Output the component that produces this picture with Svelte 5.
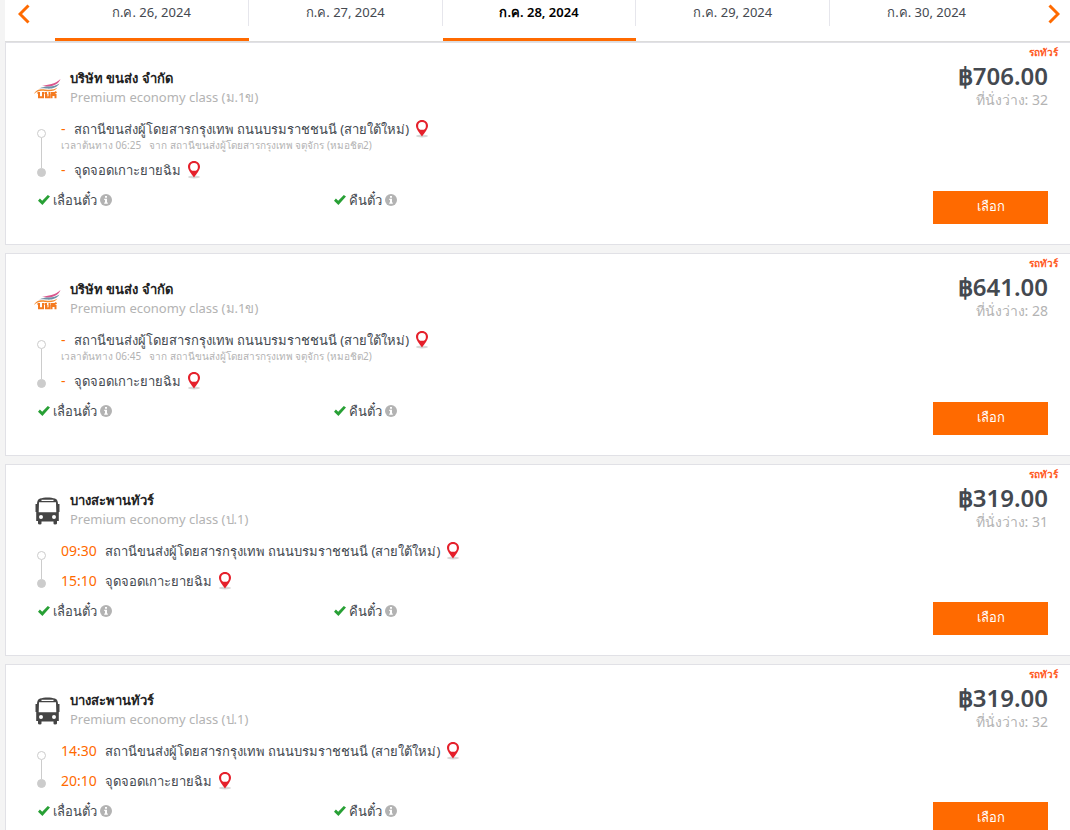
<script>
  const days = [
    { label: 'ก.ค. 26, 2024', marked: true },
    { label: 'ก.ค. 27, 2024' },
    { label: 'ก.ค. 28, 2024', marked: true, current: true },
    { label: 'ก.ค. 29, 2024' },
    { label: 'ก.ค. 30, 2024' }
  ];

  const station = 'สถานีขนส่งผู้โดยสารกรุงเทพ ถนนบรมราชชนนี (สายใต้ใหม่)';
  const stop = 'จุดจอดเกาะยายฉิม';
  const state = {
    name: 'บริษัท ขนส่ง จำกัด',
    logo: 'state',
    grade: 'Premium economy class (ม.1ข)',
    from: '-',
    to: '-',
    via: 'จาก สถานีขนส่งผู้โดยสารกรุงเทพ จตุจักร (หมอชิต2)'
  };
  const tour = { name: 'บางสะพานทัวร์', logo: 'bus', grade: 'Premium economy class (ป.1)' };

  const trips = [
    { ...state, origin: '06:25', price: '706.00', seats: 32 },
    { ...state, origin: '06:45', price: '641.00', seats: 28 },
    { ...tour, from: '09:30', to: '15:10', price: '319.00', seats: 31 },
    { ...tour, from: '14:30', to: '20:10', price: '319.00', seats: 32 }
  ];
</script>

{#snippet pin(label)}
  <button class="pin" aria-label={label}>
    <svg width="14" height="20" viewBox="0 0 14 20">
      <ellipse cx="7" cy="17" rx="6" ry="1.500" fill="#d8d8d8" />
      <path fill="#e5202b" d="M7 1C3.500 1 1 3.500 1 6.700C1 10 4.300 13.500 7 17.500C9.700 13.500 13 10 13 6.700C13 3.500 10.500 1 7 1Z" />
      <circle cx="7" cy="6.900" r="3.900" fill="#fff" />
    </svg>
  </button>
{/snippet}

{#snippet policy(text)}
  <li>
    <svg width="12" height="10" viewBox="0 0 12 10" aria-hidden="true">
      <path d="M0 5.700L1.900 3.600L4.200 5.800L9.800 0L12 1.600L4.400 10Z" fill="#28a035" />
    </svg>
    <span>{text}</span>
    <svg width="12" height="12" viewBox="0 0 12 12" aria-hidden="true">
      <circle cx="6" cy="6" r="6" fill="#b3b3b3" />
      <path d="M5 2H7V3.700H5ZM4.200 4.800H7V8.500H7.800V9.700H4.200V8.500H5V6H4.200Z" fill="#fff" />
    </svg>
  </li>
{/snippet}

<nav class="dates">
  <button class="arrow" aria-label="วันก่อนหน้า">
    <svg width="12" height="20" viewBox="0 0 12 20"><path d="M10.500 1.500L2 10L10.500 18.500" /></svg>
  </button>
  {#each days as day}
    <button class="day" class:marked={day.marked} class:current={day.current}>
      <span>{day.label}</span>
    </button>
  {/each}
  <button class="arrow next" aria-label="วันถัดไป">
    <svg width="12" height="20" viewBox="0 0 12 20"><path d="M1.500 1.500L10 10L1.500 18.500" /></svg>
  </button>
</nav>

<main>
  {#each trips as trip}
    <article>
      <div class="info">
        <header>
          {#if trip.logo === 'state'}
            <svg class="logo" width="28" height="28" viewBox="0 0 28 28" aria-hidden="true">
              <path d="M8 11C14 9.500 21 9.500 26.500 4C25 8.500 20 11 15 11.500C12 11.800 10 11 8 11Z" fill="#d9558c" />
              <path d="M5 13.500C12 10 19 13 25.500 8.500C22 13.500 17 14 12 13.500C9 13.200 7 13.200 5 13.500Z" fill="#6f90a6" />
              <path d="M0 19C2 14.500 6 13.800 11 14.400C16 15 20 15 23.500 12.500C21 16.500 16 16.600 11 16C6 15.500 3 16 0 19Z" fill="#f58a2c" />
              <g fill="none" stroke="#f47a20" stroke-width="2">
                <path d="M3.500 18H5V22.300H9V17" />
                <path d="M10.500 18H12V22.300H15.500V17M12 20H13.500" />
                <path d="M17.500 23.300V20H21.500V23.300M17 18H20.500L22.500 16.800" />
              </g>
            </svg>
          {:else}
            <svg class="logo" width="28" height="28" viewBox="0 0 28 28" aria-hidden="true">
              <path fill="#444" fill-rule="evenodd" d="M6 1.500C10 0 17 0 21 1.500Q23.500 2.300 23.800 5L24 7H25.500V15H24.800V24H23V26.500Q23 27.500 21 27.500Q19.500 27.500 19.500 26.500V24.500H7.500V26.500Q7.500 27.500 6 27.500Q4 27.500 4 26.500V24H2.200V15H1.500V7H3L3.200 5Q3.500 2.300 6 1.500ZM7.500 2.700H19.500V3.900H7.500ZM5 5.300H22L22.300 15.200H4.700ZM7 18A2 2 0 1 0 7 22A2 2 0 1 0 7 18ZM20 18A2 2 0 1 0 20 22A2 2 0 1 0 20 18Z" />
            </svg>
          {/if}
          <div>
            <h2>{trip.name}</h2>
            <p class="grade">{trip.grade}</p>
          </div>
        </header>

        <div class="route">
          <div class="track"><i></i><b></b><i class="end"></i></div>
          <div class="stops">
            <div>
              <p class="stop"><time>{trip.from}</time><span>{station}</span>{@render pin('แผนที่ต้นทาง')}</p>
              {#if trip.via}
                <p class="via"><span>เวลาต้นทาง {trip.origin}</span><span>{trip.via}</span></p>
              {/if}
            </div>
            <p class="stop"><time>{trip.to}</time><span>{stop}</span>{@render pin('แผนที่ปลายทาง')}</p>
          </div>
        </div>

        <ul class="policies">
          {@render policy('เลื่อนตั๋ว')}
          {@render policy('คืนตั๋ว')}
        </ul>
      </div>

      <div class="fare">
        <span class="kind">รถทัวร์</span>
        <strong>฿{trip.price}</strong>
        <span class="seats">ที่นั่งว่าง: {trip.seats}</span>
        <button class="select">เลือก</button>
      </div>
    </article>
  {/each}
</main>

<style>
  :global(body) {
    background: #f4f4f4;
    color: #444950;
    font: 13px/22px "Noto Sans", "Open Sans", sans-serif;
  }

  :global(html) {
    overflow: hidden;
  }

  h2, p, ul {
    margin: 0;
    padding: 0;
  }

  button {
    border: 0;
    padding: 0;
    background: none;
    color: inherit;
    font: inherit;
    cursor: pointer;
  }

  svg {
    display: block;
    flex: none;
  }

  .dates {
    display: grid;
    grid-template-columns: 50px repeat(5, 1fr) 46px;
    height: 41px;
    margin-left: 5px;
    background: #fff;
    border-bottom: 1px solid #dcdcdc;
  }

  .arrow {
    display: flex;
    align-items: flex-start;
    padding: 4px 0 0 13px;
  }

  .arrow.next {
    padding-left: 24px;
  }

  .arrow path {
    fill: none;
    stroke: #ff6a00;
    stroke-width: 3;
  }

  .day {
    display: flex;
    align-items: flex-start;
    border-bottom: 3px solid transparent;
  }

  .day span {
    flex: 1;
    padding-bottom: 2px;
    line-height: 24px;
    border-right: 1px solid #e6e6ec;
  }

  .day:nth-last-child(2) span {
    border-color: transparent;
  }

  .day.marked {
    border-color: #ff6a00;
  }

  .day.current {
    color: #000;
    font-weight: 600;
  }

  main {
    display: grid;
    gap: 8px;
    margin-left: 5px;
  }

  article {
    display: flex;
    justify-content: space-between;
    padding: 0 12px 20px 28px;
    background: #fff;
    border: 1px solid #e1e1e6;
    border-right: 0;
  }

  .info {
    padding: 26px 0 13px;
  }

  header {
    display: flex;
    gap: 8px;
  }

  .logo {
    margin-top: 6px;
  }

  h2 {
    color: #222;
    font-size: 13px;
    font-weight: 600;
    line-height: 19px;
  }

  .grade {
    color: #b3b3b3;
    line-height: 18px;
  }

  .route {
    display: flex;
    gap: 15px;
    margin-top: 12px;
    padding-left: 3px;
  }

  .track {
    display: flex;
    flex-direction: column;
    align-items: center;
    padding: 11px 0 4px;
  }

  .track i {
    box-sizing: border-box;
    width: 9px;
    height: 9px;
    border: 1px solid #ccc;
    border-radius: 50%;
  }

  .track .end {
    background: #ccc;
  }

  .track b {
    flex: 1;
    width: 1px;
    background: #ccc;
  }

  .stops {
    display: grid;
    gap: 8px;
  }

  .stop {
    display: flex;
    align-items: center;
    height: 22px;
    white-space: nowrap;
  }

  time {
    margin-right: 8px;
    color: #ff6a00;
    font-size: 14px;
  }

  .pin {
    margin-left: 6px;
  }

  .via {
    display: flex;
    gap: 8px;
    color: #b3b3b3;
    font-size: 10px;
    line-height: 11px;
    white-space: nowrap;
  }

  .policies {
    display: grid;
    grid-template-columns: 296px auto;
    margin-top: 8px;
    padding-left: 4px;
    list-style: none;
  }

  .policies li {
    display: flex;
    align-items: center;
    gap: 3px;
  }

  .fare {
    display: flex;
    flex-direction: column;
    align-items: flex-end;
    color: #b3b3b3;
    white-space: nowrap;
  }

  .kind {
    color: #ff5a1f;
    font-size: 10px;
    font-weight: 600;
    line-height: 18px;
  }

  strong {
    margin-right: 10px;
    color: #444950;
    font-size: 24px;
    font-weight: 600;
    line-height: 30px;
  }

  .seats {
    margin-right: 10px;
    font-size: 14px;
    line-height: 18px;
  }

  .select {
    width: 115px;
    height: 33px;
    margin: auto 10px 0 0;
    padding-bottom: 4px;
    background: #ff6a00;
    color: #fff;
  }
</style>
